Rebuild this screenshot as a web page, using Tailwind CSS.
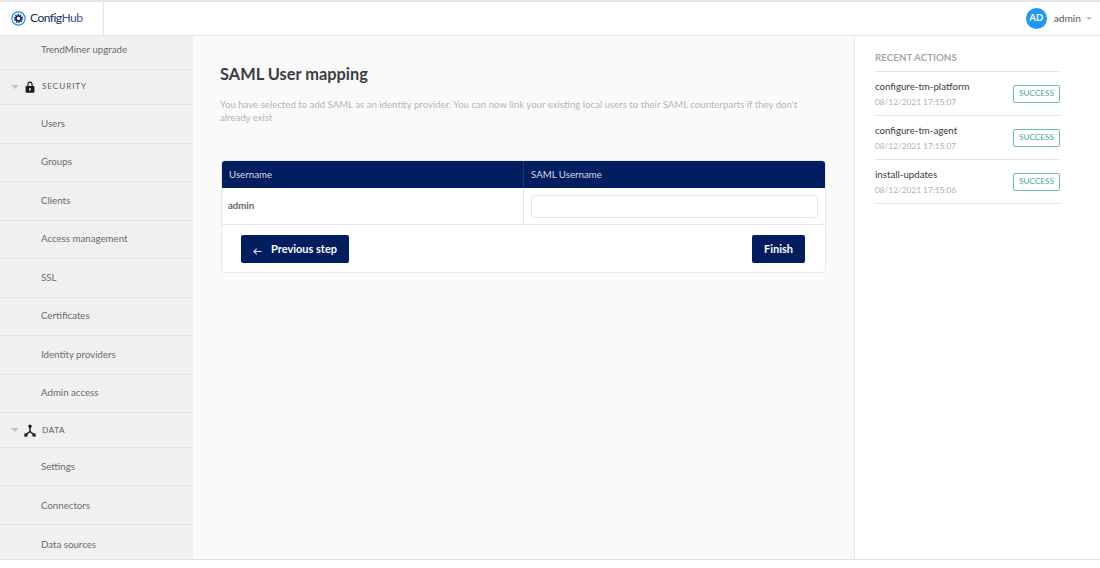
<!DOCTYPE html>
<html lang="en">
<head>
  <meta charset="UTF-8" />
  <title>ConfigHub</title>
  <script src="https://cdn.jsdelivr.net/npm/@tailwindcss/browser@4"></script>
</head>
<body class="bg-white font-['Lato','Liberation_Sans',sans-serif] overflow-hidden">
<div class="w-[1100px] h-[568px] flex flex-col">

  <!-- top bar -->
  <header class="h-[36px] shrink-0 flex items-center bg-white border-t-2 border-b border-[#e6e6e6]">
    <div class="w-[104px] h-full flex items-center pl-[11px] border-r border-[#e6e6e6]">
      <svg width="15" height="15" viewBox="0 0 24 24" class="shrink-0">
        <circle cx="12" cy="12" r="10.6" fill="none" stroke="#2196f3" stroke-width="2"/>
        <circle cx="12" cy="12" r="4.2" fill="none" stroke="#1b2a63" stroke-width="3"/>
        <circle cx="12" cy="12" r="6.6" fill="none" stroke="#1b2a63" stroke-width="1.8" stroke-dasharray="2 2.15"/>
      </svg>
      <span class="ml-[4px] text-[12.2px] tracking-[-0.6px] text-[#1b2a63]">Config<span class="text-[#3f5590]">Hub</span></span>
    </div>
    <div class="ml-auto flex items-center pr-[8px]">
      <div class="w-[21px] h-[21px] rounded-full bg-[#2196f3] text-white text-[9.5px] font-bold flex items-center justify-center">AD</div>
      <span class="ml-[7px] text-[10.2px] text-[#5a5a5a]">admin</span>
      <span class="ml-[5px] w-0 h-0 border-x-[3.5px] border-x-transparent border-t-[3.5px] border-t-[#bdbdbd]"></span>
    </div>
  </header>

  <div class="flex h-[524px] border-b border-[#e3e3e3]">
    <!-- sidebar -->
    <nav class="w-[193px] shrink-0 bg-[#f0f0f0] text-[9.7px] text-[#6b6b6b] overflow-hidden">
      <a class="h-[34px] flex items-center pl-[41px] pb-[7px] border-b border-[#e2e2e2]">TrendMiner upgrade</a>
      <div class="h-[35px] flex items-center pl-[11px] pb-px border-b border-[#e2e2e2]">
        <span class="w-0 h-0 border-x-[4px] border-x-transparent border-t-[4px] border-t-[#c4c4c4]"></span>
        <svg width="10" height="12" viewBox="0 0 12 13" class="ml-[6px]" fill="#1d1d1d" preserveAspectRatio="none">
          <path d="M1.5 5.5h9a.8.8 0 0 1 .8.8v5.7a.8.8 0 0 1-.8.8h-9a.8.8 0 0 1-.8-.8V6.300a.8.8 0 0 1 .8-.8zM6 7.700a1.100 1.100 0 0 0-.5 2.100v1.100h1V9.800A1.100 1.100 0 0 0 6 7.700z" fill-rule="evenodd"/>
          <path d="M2.800 5.800V3.700a3.200 3.200 0 0 1 6.400 0v2.100H7.900V3.700a1.900 1.900 0 0 0-3.800 0v2.100z"/>
        </svg>
        <span class="ml-[7px] text-[8.2px] tracking-[0.9px] text-[#5e5e5e]">SECURITY</span>
      </div>
      <a class="h-[38.55px] flex items-center pl-[41px] pb-[2px] border-b border-[#e2e2e2]">Users</a>
      <a class="h-[38.55px] flex items-center pl-[41px] pb-[2px] border-b border-[#e2e2e2]">Groups</a>
      <a class="h-[38.55px] flex items-center pl-[41px] pb-[2px] border-b border-[#e2e2e2]">Clients</a>
      <a class="h-[38.55px] flex items-center pl-[41px] pb-[2px] border-b border-[#e2e2e2]">Access management</a>
      <a class="h-[38.55px] flex items-center pl-[41px] pb-[2px] border-b border-[#e2e2e2]">SSL</a>
      <a class="h-[38.55px] flex items-center pl-[41px] pb-[2px] border-b border-[#e2e2e2]">Certificates</a>
      <a class="h-[38.55px] flex items-center pl-[41px] pb-[2px] border-b border-[#e2e2e2]">Identity providers</a>
      <a class="h-[38.55px] flex items-center pl-[41px] pb-[2px] border-b border-[#e2e2e2]">Admin access</a>
      <div class="h-[34.5px] flex items-center pl-[11px] border-b border-[#e2e2e2]">
        <span class="w-0 h-0 border-x-[4px] border-x-transparent border-t-[4px] border-t-[#c4c4c4]"></span>
        <svg width="12" height="13" viewBox="0 0 12 13" class="ml-[5px]" fill="#1d1d1d" stroke="#1d1d1d">
          <path d="M6 3v4.500L2 10.700M6 7.500l4 3.200" fill="none" stroke-width="1.500"/>
          <circle cx="6" cy="2.300" r="1.700" stroke="none"/>
          <rect x="0.300" y="9.600" width="3.200" height="3" stroke="none"/>
          <rect x="8.500" y="9.600" width="3.200" height="3" stroke="none"/>
        </svg>
        <span class="ml-[6px] text-[8.2px] tracking-[0.6px] text-[#5e5e5e]">DATA</span>
      </div>
      <a class="h-[38.6px] flex items-center pl-[41px] border-b border-[#e2e2e2]">Settings</a>
      <a class="h-[38.6px] flex items-center pl-[41px] border-b border-[#e2e2e2]">Connectors</a>
      <a class="h-[38.6px] flex items-center pl-[41px]">Data sources</a>
    </nav>

    <!-- main -->
    <main class="w-[661px] shrink-0 bg-[#fafafa] pl-[27px] pr-[28px]">
      <h1 class="mt-[27px] text-[16.4px] leading-[22px] font-bold text-[#3a3d42]">SAML User mapping</h1>
      <p class="mt-[13px] text-[9.63px] leading-[13px] text-[#b5b5b5]">You have selected to add SAML as an identity provider. You can now link your existing local users to their SAML counterparts if they don't already exist</p>
      <div class="mt-[36px] ml-px h-[113px] bg-white rounded-[4px] border border-[#e8e8e8] overflow-hidden">
        <div class="h-[28px] bg-[#001e5f] flex text-[9.7px] text-[#d5dbe8] -mx-px -mt-px">
          <div class="w-[303px] flex items-center pl-[8px] border-r border-[#1c3873]">Username</div>
          <div class="flex-1 flex items-center pl-[7px]">SAML Username</div>
        </div>
        <div class="h-[37px] flex border-b border-[#e8e8e8]">
          <div class="w-[302px] flex items-center pl-[6px] text-[9.6px] font-bold text-[#666] border-r border-[#e8e8e8]">admin</div>
          <div class="flex-1 flex items-center pl-[7px] pr-[7px]">
            <input type="text" class="w-full h-[23px] rounded-[3px] border border-[#e8e8e8] bg-white" />
          </div>
        </div>
        <div class="flex justify-between items-start pt-[10px] pl-[19px] pr-[20px]">
          <button class="w-[108px] h-[28px] rounded-[2px] bg-[#001e5f] text-white text-[11px] font-bold flex items-center pl-[12px]">
            <svg width="9" height="9" viewBox="0 0 8 8" class="mt-[5px]" fill="none" stroke="#e8ecf4" stroke-width="0.900"><path d="M7.500 4H.800M3.300 1.500.800 4l2.500 2.500"/></svg>
            <span class="ml-[9px]">Previous step</span>
          </button>
          <button class="w-[53px] h-[28px] rounded-[2px] bg-[#001e5f] text-white text-[11px] font-bold">Finish</button>
        </div>
      </div>
    </main>

    <!-- recent actions -->
    <aside class="flex-1 bg-white border-l border-[#e8e8e8] pl-[20px] pr-[40px]">
      <h2 class="mt-[15px] text-[9.8px] leading-[13px] font-bold text-[#a8a8a8] border-b border-[#e2e2e2] h-[21px]">RECENT ACTIONS</h2>
      <div class="h-[44px] flex items-center justify-between border-b border-[#e2e2e2]">
        <div>
          <div class="text-[9.7px] leading-[13px] text-[#3a3a3a]">configure-tm-platform</div>
          <div class="mt-[3px] text-[8.3px] leading-[12px] text-[#b0b0b0]">08/12/2021 17:15:07</div>
        </div>
        <span class="w-[47px] h-[18px] flex items-center justify-center rounded-[2px] border-[1.5px] border-[#6cc097] text-[8.2px] text-[#3fae77]">SUCCESS</span>
      </div>
      <div class="h-[44px] flex items-center justify-between border-b border-[#e2e2e2]">
        <div>
          <div class="text-[9.7px] leading-[13px] text-[#3a3a3a]">configure-tm-agent</div>
          <div class="mt-[3px] text-[8.3px] leading-[12px] text-[#b0b0b0]">08/12/2021 17:15:07</div>
        </div>
        <span class="w-[47px] h-[18px] flex items-center justify-center rounded-[2px] border-[1.5px] border-[#6cc097] text-[8.2px] text-[#3fae77]">SUCCESS</span>
      </div>
      <div class="h-[44px] flex items-center justify-between border-b border-[#e2e2e2]">
        <div>
          <div class="text-[9.7px] leading-[13px] text-[#3a3a3a]">install-updates</div>
          <div class="mt-[3px] text-[8.3px] leading-[12px] text-[#b0b0b0]">08/12/2021 17:15:06</div>
        </div>
        <span class="w-[47px] h-[18px] flex items-center justify-center rounded-[2px] border-[1.5px] border-[#6cc097] text-[8.2px] text-[#3fae77]">SUCCESS</span>
      </div>
    </aside>
  </div>
</div>
</body>
</html>
